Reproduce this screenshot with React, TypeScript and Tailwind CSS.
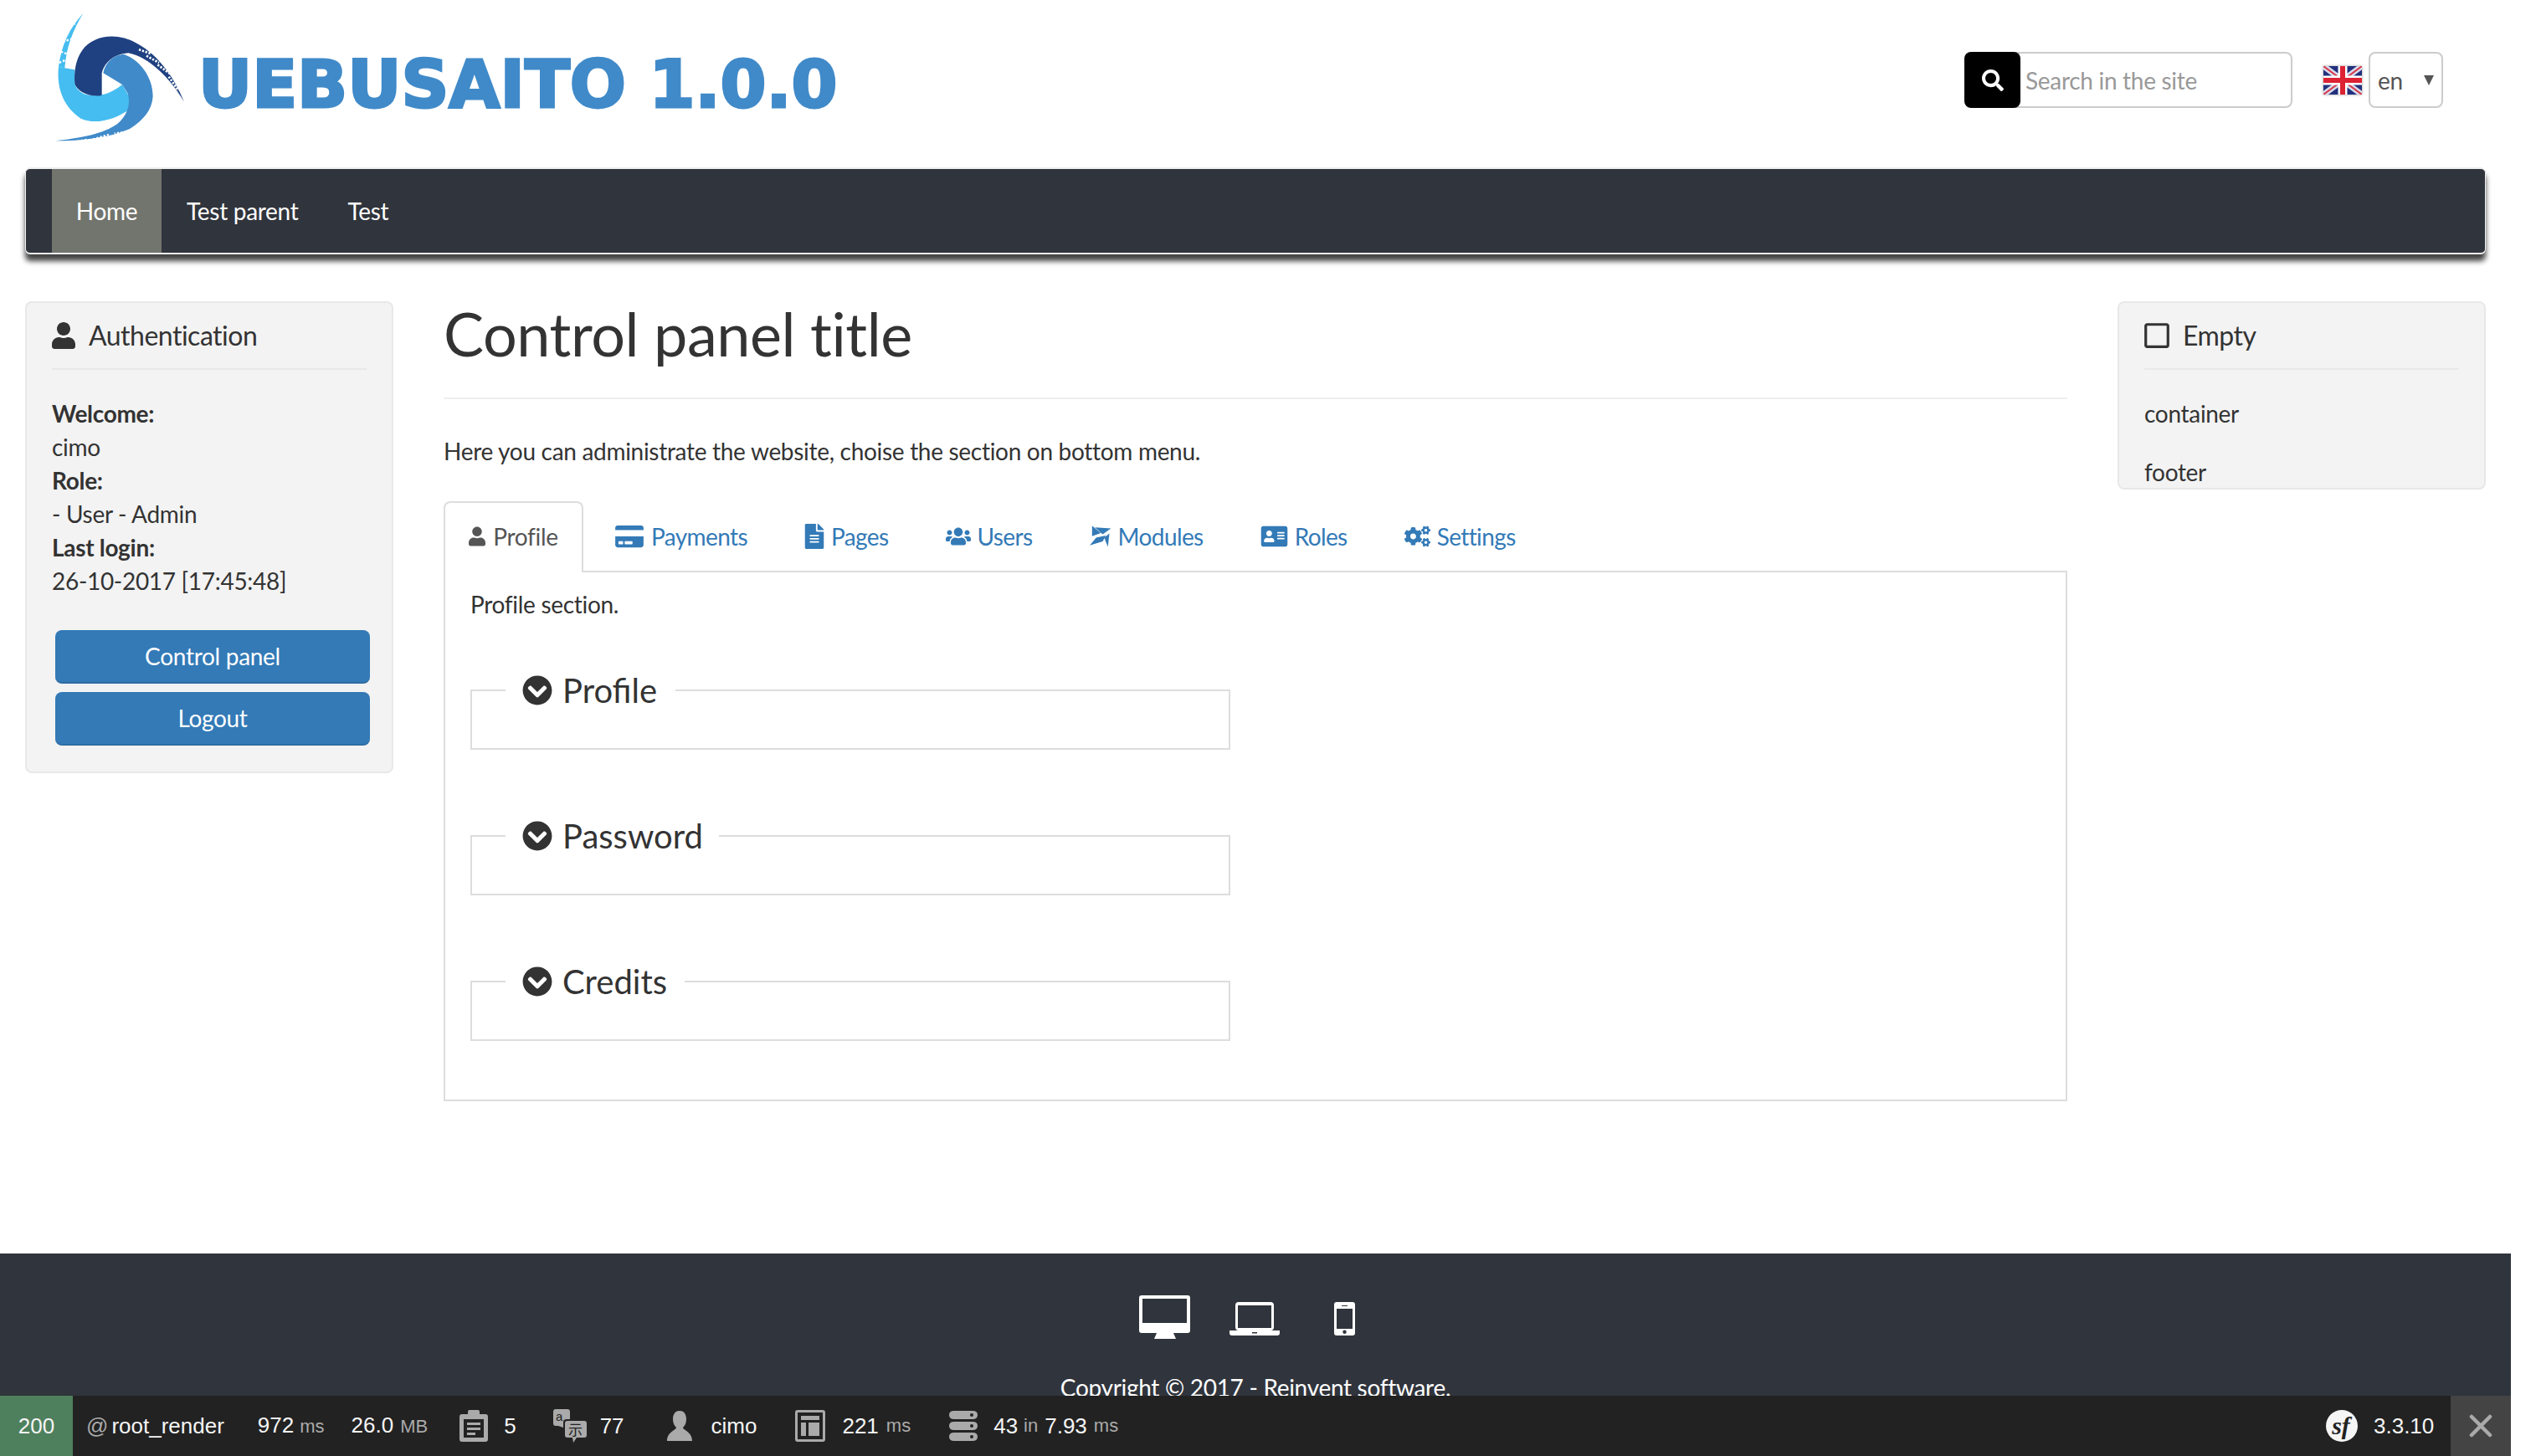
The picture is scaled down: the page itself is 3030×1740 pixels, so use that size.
import type { ReactNode } from "react";
import {
  FaAddressCard,
  FaChevronCircleDown,
  FaCogs,
  FaCreditCard,
  FaFileAlt,
  FaRegSquare,
  FaSearch,
  FaUser,
  FaUsers,
} from "react-icons/fa";

const bodyFont = "font-['Lato','Noto_Sans',sans-serif]";

const tabs = [
  { label: "Payments", icon: <FaCreditCard className="h-[30px] w-[36px]" /> },
  { label: "Pages", icon: <FaFileAlt className="h-[30px] w-[24px]" /> },
  { label: "Users", icon: <FaUsers className="h-[30px] w-[30px]" /> },
  { label: "Modules", icon: <ModulesIcon /> },
  { label: "Roles", icon: <FaAddressCard className="h-[28px] w-[33px]" /> },
  { label: "Settings", icon: <FaCogs className="h-[28px] w-[31px]" /> },
];

// coordinates follow a 3x crop of the logo, hence the big viewBox
function Logo() {
  return (
    <svg viewBox="0 0 600 570" className="h-[190px] w-[200px] shrink-0">
      <path d="M178 48 C130 100 100 160 90 240 L112 244 C118 170 140 110 178 48Z" fill="#45bdf0" />
      <path d="M120 95 L150 85 M105 150 L135 140 M98 185 L125 195 M92 225 L115 215" stroke="#fff" strokeWidth="7" strokeDasharray="8 6" />
      <path d="M90 240 C82 320 110 385 170 425 C225 450 295 425 340 395 L345 350 L318 303 C285 330 250 345 205 342 C170 340 148 315 148 295 L148 250Z" fill="#45bdf0" />
      <path d="M540 365 C510 290 455 200 370 155 C300 115 215 125 175 180 C150 215 145 260 148 300 C155 325 195 350 245 342 L245 262 C255 225 285 195 340 190 C415 205 490 280 540 365Z" fill="#1f4181" />
      <path d="M250 262 C258 222 290 195 325 195 C380 215 428 275 428 345 C425 395 395 430 345 462 C270 495 170 505 80 505 C170 495 250 480 300 445 C335 415 350 375 338 335 L318 303Z" fill="#408ac9" />
      <path d="M378 178 L420 192 M405 200 L450 225 M445 232 L490 265 M485 275 L520 325" stroke="#fff" strokeWidth="8" strokeDasharray="7 5" />
      <path d="M345 470 L290 478 M270 482 L210 500 M190 500 L130 512" stroke="#fff" strokeWidth="6" strokeDasharray="7 6" />
    </svg>
  );
}

function ModulesIcon() {
  return (
    <svg viewBox="0 0 84 82" className="h-[26px] w-[26px] fill-current">
      <path d="M9 0 V40 L43 28Z" />
      <path d="M20 6 L82 10 L50 33Z" />
      <path d="M0 76 L25 46 L62 38 L50 60Z" />
      <path d="M56 46 L70 81 L76 30Z" />
    </svg>
  );
}

function FlagIcon() {
  return (
    <svg viewBox="0 0 46 34" className="h-[34px] w-[46px] shrink-0 shadow-[0_0_3px_#999]">
      <rect width="46" height="34" fill="#23307e" />
      <path d="M0 0 L46 34 M46 0 L0 34" stroke="#d8dcec" strokeWidth="7" />
      <path d="M0 0 L46 34 M46 0 L0 34" stroke="#d8384a" strokeWidth="2" />
      <path d="M23 0 V34 M0 17 H46" stroke="#fff" strokeWidth="11" />
      <path d="M23 0 V34 M0 17 H46" stroke="#dc2233" strokeWidth="6" />
    </svg>
  );
}

function Fieldset({ title, gap }: { title: string; gap: string }) {
  return (
    <fieldset className="h-[89px] w-[908px] border-2 border-[#ddd] pl-[40px]">
      <legend className={`flex items-center gap-[12px] px-[20px] text-[40px] leading-[36px] tracking-normal text-[#333] ${gap}`}>
        <FaChevronCircleDown className="h-[36px] w-[36px] shrink-0" />
        {title}
      </legend>
    </fieldset>
  );
}

function SidePanel({ title, icon, children, height }: { title: string; icon: ReactNode; children: ReactNode; height: string }) {
  return (
    <aside className={`w-[440px] shrink-0 overflow-hidden rounded-[8px] border-2 border-[#e8e8e8] bg-[#f3f3f3] px-[30px] ${height}`}>
      <div className="flex h-[80px] items-center gap-[16px] border-b-2 border-[#e9e9e9] text-[32px] tracking-[-0.5px] text-[#333]">
        {icon}
        {title}
      </div>
      {children}
    </aside>
  );
}

function Toolbar() {
  const muted = "text-[22px] text-[#aaa]";
  return (
    <div className="fixed bottom-0 left-0 flex h-[72px] w-[3000px] items-center bg-[#222] font-['Liberation_Sans',sans-serif] text-[26px] tracking-normal text-[#f5f5f5]">
      <div className="flex h-full w-[87px] items-center justify-center bg-[#4f805d]">200</div>
      <div className="ml-[16px] flex items-baseline gap-[4px]">
        <span className="text-[#aaa]">@</span>
        root_render
      </div>
      <div className="ml-[40px] flex items-baseline gap-[7px]">
        972<span className={muted}>ms</span>
      </div>
      <div className="ml-[32px] flex items-baseline gap-[8px]">
        26.0<span className={muted}>MB</span>
      </div>
      <svg viewBox="0 0 34 38" className="ml-[38px] h-[38px] w-[34px] fill-[#aaa]">
        <path d="M3 5 H10 V2 Q10 0 12 0 H22 Q24 0 24 2 V5 H31 Q34 5 34 8 V35 Q34 38 31 38 H3 Q0 38 0 35 V8 Q0 5 3 5Z M5 11 V33 H29 V11Z M9 15 H25 V18 H9Z M9 21 H25 V24 H9Z M9 27 H19 V30 H9Z" fillRule="evenodd" />
      </svg>
      <span className="ml-[19px]">5</span>
      <svg viewBox="0 0 40 40" className="ml-[44px] h-[40px] w-[40px] fill-[#aaa]">
        <path d="M3 0 H17 Q20 0 20 3 V12 H16 Q12 12 12 16 V22 L6 20 H3 Q0 20 0 17 V3 Q0 0 3 0Z" />
        <path d="M17 14 H37 Q40 14 40 17 V31 Q40 34 37 34 H28 L24 40 L23 34 H17 Q14 34 14 31 V17 Q14 14 17 14Z" />
        <text x="3" y="14" fontSize="15" fill="#222" fontFamily="Liberation Sans, sans-serif">a</text>
        <text x="18" y="31" fontSize="17" fill="#222" fontFamily="Noto Sans CJK JP, sans-serif">示</text>
      </svg>
      <span className="ml-[16px]">77</span>
      <svg viewBox="0 0 30 36" className="ml-[51px] h-[36px] w-[30px] fill-[#aaa]">
        <path d="M15 0 C21 0 23 5 23 10 C23 15 21 18 19 20 C19 23 30 25 30 36 H0 C0 25 11 23 11 20 C9 18 7 15 7 10 C7 5 9 0 15 0Z" />
      </svg>
      <span className="ml-[23px]">cimo</span>
      <svg viewBox="0 0 36 38" className="ml-[46px] h-[38px] w-[36px] fill-[#aaa]">
        <path d="M3 0 H33 Q36 0 36 3 V35 Q36 38 33 38 H3 Q0 38 0 35 V3 Q0 0 3 0Z M3 3 V35 H33 V3Z M7 7 H29 V12 H7Z M7 15 H13 V31 H7Z M16 15 H29 V31 H16Z" fillRule="evenodd" />
      </svg>
      <span className="ml-[20px]">221</span>
      <span className={`ml-[9px] ${muted}`}>ms</span>
      <svg viewBox="0 0 34 36" className="ml-[46px] h-[36px] w-[34px] fill-[#aaa]">
        <path d="M6 0 H28 Q34 0 34 5 Q34 10 28 10 H6 Q0 10 0 5 Q0 0 6 0Z M6 13 H28 Q34 13 34 18 Q34 23 28 23 H6 Q0 23 0 18 Q0 13 6 13Z M6 26 H28 Q34 26 34 31 Q34 36 28 36 H6 Q0 36 0 31 Q0 26 6 26Z" />
        <circle cx="27" cy="5" r="2" fill="#222" />
        <circle cx="27" cy="18" r="2" fill="#222" />
        <circle cx="27" cy="31" r="2" fill="#222" />
      </svg>
      <span className="ml-[19px]">43</span>
      <span className={`ml-[7px] ${muted}`}>in</span>
      <span className="ml-[8px]">7.93</span>
      <span className={`ml-[8px] ${muted}`}>ms</span>
      <div className="ml-auto flex h-full items-center">
        <div className="flex h-[38px] w-[38px] items-center justify-center rounded-full bg-[#f5f5f5] pr-[2px] font-['Liberation_Serif',serif] text-[30px] leading-none font-bold text-[#222] italic">
          sf
        </div>
        <span className="ml-[19px] w-[72px]">3.3.10</span>
        <div className="ml-[20px] flex h-full w-[72px] items-center justify-center bg-[#444]">
          <svg viewBox="0 0 28 28" className="h-[28px] w-[28px]">
            <path d="M3 3 L25 25 M25 3 L3 25" stroke="#aaa" strokeWidth="4.5" strokeLinecap="round" />
          </svg>
        </div>
      </div>
    </div>
  );
}

export default function App() {
  return (
    <div className={`h-screen w-[3000px] overflow-hidden bg-white text-[28px] leading-[40px] tracking-[-0.3px] text-[#333] ${bodyFont}`}>
      <header className="flex h-[200px] items-start pr-[81px] pl-[40px]">
        <Logo />
        <h1 className="mt-[46px] -ml-[3px] font-['DejaVu_Sans',sans-serif] text-[79px] leading-[110px] font-bold tracking-normal whitespace-nowrap text-[#408ac9] [-webkit-text-stroke:3px_#408ac9]">
          UEBUSAITO 1.0.0
        </h1>
        <div className="mt-[62px] ml-auto flex items-center">
          <div className="relative z-10 flex h-[67px] w-[67px] items-center justify-center rounded-[8px] bg-black text-white">
            <FaSearch className="h-[26px] w-[26px]" />
          </div>
          <div className="-ml-[8px] flex h-[67px] w-[333px] items-center rounded-r-[8px] border-2 border-[#ccc] pl-[12px] text-[#999]">
            Search in the site
          </div>
          <div className="ml-[37px]">
            <FlagIcon />
          </div>
          <div className="relative ml-[8px] flex h-[67px] w-[89px] items-center rounded-[8px] border-2 border-[#ccc] pl-[9px] text-[#555]">
            en
            <span className="absolute top-[26px] right-[9px] h-0 w-0 border-x-[6px] border-t-[12px] border-x-transparent border-t-[#555]" />
          </div>
        </div>
      </header>

      <div className="px-[30px]">
        <nav className="flex h-[104px] items-stretch rounded-[6px] border-y-2 border-x border-[#eee] bg-[#30343c] pl-[31px] text-white shadow-[0_8px_6px_#444]">
          <a className="flex w-[131px] items-center justify-center bg-[#72746e]">Home</a>
          <a className="ml-[30px] flex items-center">Test parent</a>
          <a className="ml-[59px] flex items-center">Test</a>
        </nav>

        <div className="mt-[56px] flex items-start gap-[60px]">
          <SidePanel title="Authentication" height="h-[564px]" icon={<FaUser className="h-[32px] w-[28px]" />}>
            <div className="mt-[32px]">
              <div className="font-bold">Welcome:</div>
              <div>cimo</div>
              <div className="font-bold">Role:</div>
              <div>- User - Admin</div>
              <div className="font-bold">Last login:</div>
              <div>26-10-2017 [17:45:48]</div>
            </div>
            <div className="mt-[39px] ml-[4px] flex w-[376px] flex-col gap-[10px] text-white">
              <button className="h-[64px] rounded-[8px] border-b-2 border-[#2e6da4] bg-[#337ab7]">Control panel</button>
              <button className="h-[64px] rounded-[8px] border-b-2 border-[#2e6da4] bg-[#337ab7]">Logout</button>
            </div>
          </SidePanel>

          <main className="w-[1940px] shrink-0">
            <h2 className="flex h-[117px] items-center border-b-2 border-[#eee] pb-[40px] text-[72px] leading-[80px] tracking-[-0.45px]">
              Control panel title
            </h2>
            <p className="mt-[42px]">Here you can administrate the website, choise the section on bottom menu.</p>

            <div className="mt-[40px] flex h-[83px] items-stretch">
              <div className="z-10 -mb-[2px] flex w-[167px] items-center justify-center gap-[9px] rounded-t-[8px] border-2 border-b-0 border-[#ddd] bg-white pb-[3px] text-[#555]">
                <FaUser className="h-[26px] w-[20px]" />
                Profile
              </div>
              <ul className="ml-[37px] flex items-center gap-[68px] tracking-[-0.6px] text-[#337ab7]">
                {tabs.map((tab) => (
                  <li key={tab.label} className="flex items-center gap-[8px]">
                    {tab.icon}
                    {tab.label}
                  </li>
                ))}
              </ul>
            </div>
            <section className="h-[634px] border-2 border-[#ddd] px-[30px] pt-[18px]">
              <p>Profile section.</p>
              <div className="mt-[65px] flex flex-col gap-[85px]">
                <Fieldset title="Profile" gap="w-[203px]" />
                <Fieldset title="Password" gap="w-[255px]" />
                <Fieldset title="Credits" gap="w-[214px]" />
              </div>
            </section>
          </main>

          <SidePanel title="Empty" height="h-[225px]" icon={<FaRegSquare className="h-[34px] w-[30px]" />}>
            <div className="mt-[32px]">container</div>
            <div className="mt-[30px]">footer</div>
          </SidePanel>
        </div>
      </div>

      <footer className="mt-[182px] h-[300px] bg-[#30343c] text-center text-white">
        <div className="flex h-[140px] items-start justify-center pt-[50px] pr-[20px]">
          <svg viewBox="0 0 61 52" className="h-[52px] w-[61px] fill-white">
            <path d="M3 0 H58 Q61 0 61 3 V42 Q61 45 58 45 H41 L44 52 H18 L21 45 H3 Q0 45 0 42 V3 Q0 0 3 0Z M4 4 V33 H57 V4Z" fillRule="evenodd" />
          </svg>
          <svg viewBox="0 0 60 40" className="mt-[8px] ml-[47px] h-[40px] w-[60px] fill-white">
            <path d="M11 0 H49 Q53 0 53 4 V30 Q53 34 49 34 H11 Q7 34 7 30 V4 Q7 0 11 0Z M10 4 V31 H50 V4Z" fillRule="evenodd" />
            <path d="M0 34 H60 V37 Q60 40 57 40 H3 Q0 40 0 37Z M27 36 V37.5 H33 V36Z" fillRule="evenodd" />
          </svg>
          <svg viewBox="0 0 25 40" className="mt-[8px] ml-[65px] h-[40px] w-[25px] fill-white">
            <path d="M3 0 H22 Q25 0 25 3 V37 Q25 40 22 40 H3 Q0 40 0 37 V3 Q0 0 3 0Z M3 8 V32 H22 V8Z M9 4 V5 H16 V4Z M12.5 33.5 A2.2 2.2 0 1 0 12.5 38 A2.2 2.2 0 1 0 12.5 33.5Z" fillRule="evenodd" />
          </svg>
        </div>
        <p>Copyright © 2017 - Reinvent software.</p>
      </footer>

      <Toolbar />
    </div>
  );
}
